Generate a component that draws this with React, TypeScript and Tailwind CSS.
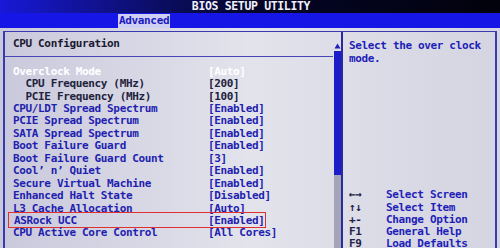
const rows: { label: string; value: string; tone: "sel" | "sub" | "item"; boxed?: boolean }[] = [
  { label: "Overclock Mode", value: "[Auto]", tone: "sel" },
  { label: "  CPU Frequency (MHz)", value: "[200]", tone: "sub" },
  { label: "  PCIE Frequency (MHz)", value: "[100]", tone: "sub" },
  { label: "CPU/LDT Spread Spectrum", value: "[Enabled]", tone: "item" },
  { label: "PCIE Spread Spectrum", value: "[Enabled]", tone: "item" },
  { label: "SATA Spread Spectrum", value: "[Enabled]", tone: "item" },
  { label: "Boot Failure Guard", value: "[Enabled]", tone: "item" },
  { label: "Boot Failure Guard Count", value: "[3]", tone: "item" },
  { label: "Cool’ n’ Quiet", value: "[Enabled]", tone: "item" },
  { label: "Secure Virtual Machine", value: "[Enabled]", tone: "item" },
  { label: "Enhanced Halt State", value: "[Disabled]", tone: "item" },
  { label: "L3 Cache Allocation", value: "[Auto]", tone: "item" },
  { label: "ASRock UCC", value: "[Enabled]", tone: "item", boxed: true },
  { label: "CPU Active Core Control", value: "[All Cores]", tone: "item" },
];

const help = [
  { key: "←→", text: "Select Screen" },
  { key: "↑↓", text: "Select Item" },
  { key: "+-", text: "Change Option" },
  { key: "F1", text: "General Help" },
  { key: "F9", text: "Load Defaults" },
];

const toneClass = {
  sel: "text-white",
  sub: "text-[#22223c]",
  item: "text-[#1f1fb0]",
};

export default function App() {
  return (
    <div
      className="w-[500px] h-[248px] overflow-hidden flex flex-col bg-[#d6d6e4] font-bold text-[11px] tracking-[-0.35px] whitespace-pre"
      style={{ fontFamily: '"DejaVu Sans Mono", "Liberation Mono", monospace' }}
    >
      {/* title bar */}
      <div className="h-[13px] shrink-0 flex items-center justify-center bg-gradient-to-r from-[#1818d8] via-[#05052a] to-[#02020c] text-[#f0f0f8] leading-none pl-[2px] text-[11.5px]">
        BIOS SETUP UTILITY
      </div>

      {/* tab bar */}
      <div className="h-[15px] shrink-0 bg-[#1616e6] flex items-end pl-[118px]">
        <div className="h-[14px] px-[1px] bg-[#cfcff4] text-[#1a1ac0] leading-[14px]">Advanced</div>
      </div>

      {/* body */}
      <div className="flex-1 flex pt-[3px] pl-[3px] pr-[3px] bg-gradient-to-r from-[#c9c9dc] via-[#e3e3ec] to-[#d4d4e2]">
        <div className="flex-1 flex border-l-2 border-t border-r-2 border-[#3a3ab0]">
          {/* left panel */}
          <div className="w-[336px] flex">
            <div className="flex-1 flex flex-col">
              <div className="h-[25px] flex items-center pl-[8px] border-b border-[#4646b4] text-[#1a1a30]">
                CPU Configuration
              </div>
              <div className="flex flex-col pt-[8px] pl-[2px]">
                {rows.map((r) => (
                  <div
                    key={r.label}
                    className={`relative h-[12.45px] flex items-center leading-none pl-[6px] ${toneClass[r.tone]}`}
                  >
                    {r.boxed && (
                      <div className="absolute left-[1px] top-[-2px] w-[258px] h-[16px] border-[1.5px] border-[#e03030]" />
                    )}
                    <span className={`w-[195px] ${r.boxed ? "pl-[1px]" : ""}`}>{r.label}</span>
                    <span>{r.value}</span>
                  </div>
                ))}
              </div>
            </div>
            {/* scrollbar */}
            <div className="w-[8px] flex flex-col items-center pt-[11px]">
              <svg width="7" height="6" viewBox="0 0 7 6" className="mb-[2px]">
                <path d="M3.5 0.5 L6.5 5.5 L0.5 5.5 Z" fill="#2020b8" />
              </svg>
              <div className="w-[7px] h-[124px] bg-[#1c1cc8]" />
              <div className="w-[7px] flex-1 bg-[#a4a4b8]" />
            </div>
          </div>

          {/* right panel */}
          <div className="flex-1 flex flex-col border-l-2 border-[#2a2aa0] pl-[6px] text-[#1e1eb8]">
            <div className="pt-[8px] leading-[12.5px]">
              <div>Select the over clock</div>
              <div>mode.</div>
            </div>
            <div className="mt-auto -mb-[2px] flex flex-col">
              {help.map((h) => (
                <div key={h.key} className="h-[12.25px] flex items-center leading-none">
                  <span className="w-[37px] text-[#22224a]">{h.key}</span>
                  <span>{h.text}</span>
                </div>
              ))}
            </div>
          </div>
        </div>
      </div>
    </div>
  );
}
